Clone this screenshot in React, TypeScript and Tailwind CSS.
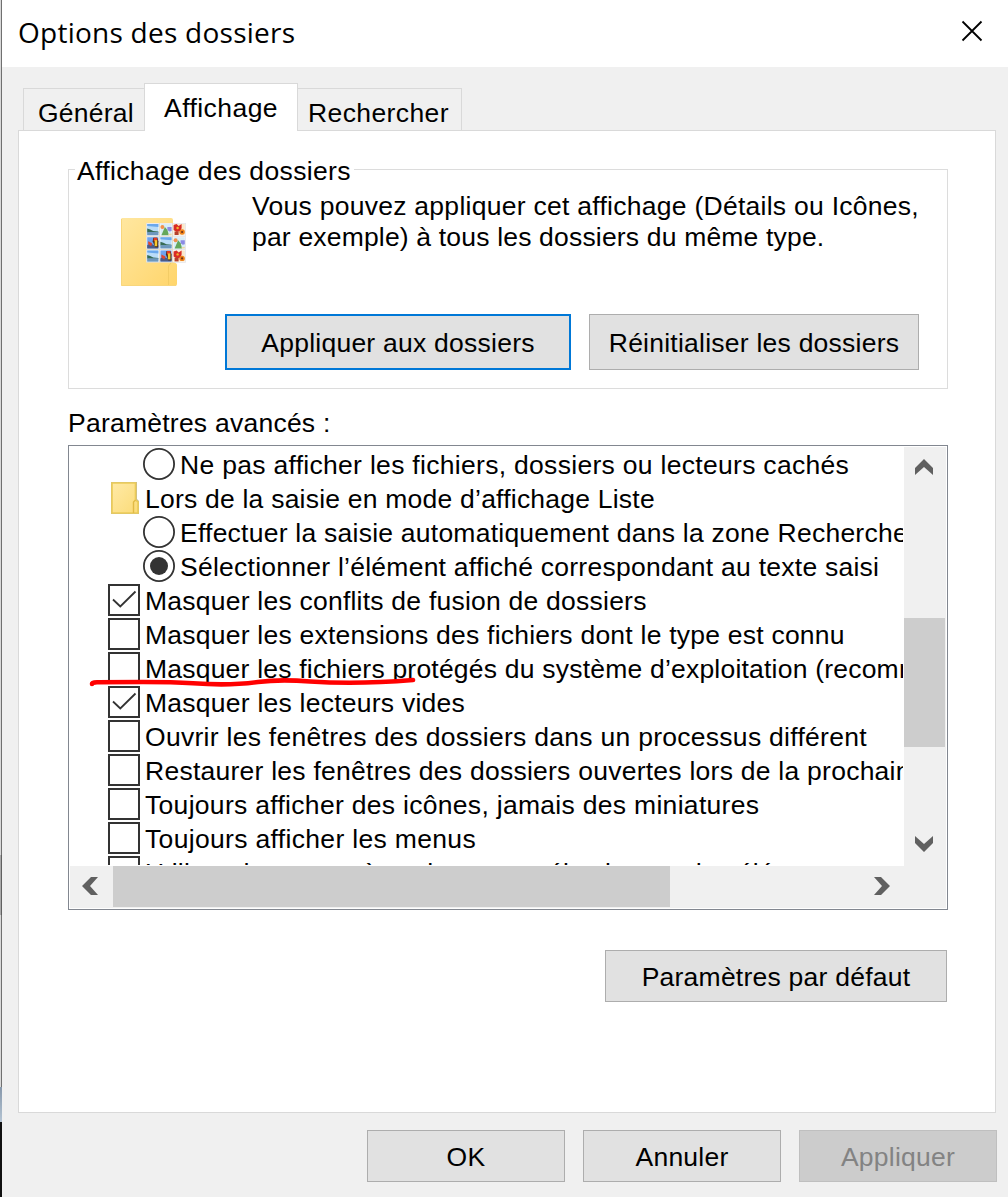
import React from "react";

type RowKind = "radio" | "radio-on" | "folder" | "check" | "check-on";

const rows: { kind: RowKind; text: string; tracking: string }[] = [
  { kind: "radio", text: "Ne pas afficher les fichiers, dossiers ou lecteurs cachés", tracking: "tracking-[0.3px]" },
  { kind: "folder", text: "Lors de la saisie en mode d’affichage Liste", tracking: "tracking-[0.22px]" },
  { kind: "radio", text: "Effectuer la saisie automatiquement dans la zone Rechercher", tracking: "tracking-[0.24px]" },
  { kind: "radio-on", text: "Sélectionner l’élément affiché correspondant au texte saisi", tracking: "tracking-[0.25px]" },
  { kind: "check-on", text: "Masquer les conflits de fusion de dossiers", tracking: "tracking-[0.23px]" },
  { kind: "check", text: "Masquer les extensions des fichiers dont le type est connu", tracking: "tracking-[0.23px]" },
  { kind: "check", text: "Masquer les fichiers protégés du système d’exploitation (recommandé)", tracking: "tracking-[0.21px]" },
  { kind: "check-on", text: "Masquer les lecteurs vides", tracking: "tracking-[0.24px]" },
  { kind: "check", text: "Ouvrir les fenêtres des dossiers dans un processus différent", tracking: "tracking-[0.28px]" },
  { kind: "check", text: "Restaurer les fenêtres des dossiers ouvertes lors de la prochaine connexion", tracking: "tracking-[0.25px]" },
  { kind: "check", text: "Toujours afficher des icônes, jamais des miniatures", tracking: "tracking-[0.3px]" },
  { kind: "check", text: "Toujours afficher les menus", tracking: "tracking-[0.33px]" },
  { kind: "check", text: "Utiliser des cases à cocher pour sélectionner des éléments", tracking: "tracking-[0.16px]" },
];

function RowIcon({ kind }: { kind: RowKind }) {
  if (kind === "folder") {
    return (
      <svg width="28" height="32" viewBox="0 0 28 32" className="mt-px mr-[6px] ml-[41px] shrink-0">
        <defs>
          <linearGradient id="smallFolder" x1="0" y1="0" x2="1" y2="1">
            <stop offset="0" stopColor="#ffeaa6" />
            <stop offset="1" stopColor="#fbdb78" />
          </linearGradient>
        </defs>
        <path d="M0 0H26V17L28 19V32H0Z" fill="#c9bc8c" />
        <path d="M1 1H24.5V18L27 20V31H1Z" fill="url(#smallFolder)" stroke="#eccb58" strokeWidth="1.6" />
        <path d="M22.5 31V20L24.5 18" fill="none" stroke="#e2ba45" strokeWidth="1.4" />
      </svg>
    );
  }
  if (kind === "radio" || kind === "radio-on") {
    return (
      <svg width="32" height="32" viewBox="0 0 32 32" className="mt-px mr-[5px] ml-[73px] shrink-0">
        <circle cx="16" cy="16" r="15.1" fill="#fff" stroke="#333" strokeWidth="1.8" />
        {kind === "radio-on" && <circle cx="16" cy="16" r="9" fill="#333" />}
      </svg>
    );
  }
  return (
    <svg width="32" height="32" viewBox="0 0 32 32" className="mt-px mr-[5px] ml-[38px] shrink-0">
      <rect x="1" y="1" width="30" height="30" fill="#fff" stroke="#333" strokeWidth="2" />
      {kind === "check-on" && <path d="M5 15.5L12.3 22.5L27.5 7.5" fill="none" stroke="#333" strokeWidth="1.8" />}
    </svg>
  );
}

function Photo({ x, y, type }: { x: number; y: number; type: number }) {
  return (
    <g transform={`translate(${x} ${y})`}>
      <rect width="13.2" height="13.2" fill="#dcdde3" />
      <rect x=".6" y=".6" width="12" height="12" fill="#fff" />
      {type === 0 && (
        <>
          <rect x="1" y="1" width="11.2" height="11.2" fill="#b9dcf8" />
          <path d="M1 1H12.2V4L1 3Z" fill="#6aa8ec" />
          <path d="M1 5.5L4 6.5L7 8L12.2 8.6V9.4H1Z" fill="#376b55" />
          <rect x="1" y="9" width="11.2" height="3.2" fill="#6d97bd" />
        </>
      )}
      {type === 1 && (
        <>
          <rect x="1" y="1" width="11.2" height="11.2" fill="#d8edf7" />
          <circle cx="3" cy="4" r="2" fill="#f2914b" />
          <path d="M8 4H12.2V8L10 8.5L8 7Z" fill="#8c8be4" />
          <path d="M5.5 4L8 7L9.5 12.2H2Z" fill="#64a75b" />
          <path d="M9 11L12.2 10.5V12.2H9Z" fill="#efd9a0" />
        </>
      )}
      {type === 2 && (
        <>
          <rect x="1" y="1" width="11.2" height="11.2" fill="#f9e8cb" />
          <path d="M1 2L4 1L6 3L9 1L9 5L8 8L4 9L1 7Z" fill="#d92c24" />
          <circle cx="5" cy="5" r="1.2" fill="#f7b52e" />
          <path d="M2 8.5H6V12H2Z" fill="#b5402c" />
          <circle cx="9.5" cy="9" r="2.7" fill="#ef8219" />
          <circle cx="9.5" cy="9" r="1.1" fill="#6c3219" />
        </>
      )}
      {type === 3 && (
        <>
          <rect x="1" y="1" width="11.2" height="11.2" fill="#6fa3ee" />
          <path d="M1 9L4 7L8 9L12.2 9V12.2H1Z" fill="#4b5a86" />
          <path d="M7 1.5H11L12.2 5L12 11H9L6.5 5Z" fill="#4a3020" />
          <path d="M7.5 1.5H11V5H7.5Z" fill="#e63a22" />
          <path d="M8.5 4H11V10H8.5Z" fill="#f9c92e" />
          <path d="M2 5L6 7L5 10L2 8Z" fill="#e2452e" />
        </>
      )}
    </g>
  );
}

const photos = [0, 1, 2, 3, 0, 1, 0, 3, 2];

function FolderPicture() {
  return (
    <svg width="66" height="70" viewBox="0 0 66 70" className="mt-[47px] ml-[52px] shrink-0">
      <defs>
        <linearGradient id="folder" x1="0" y1="0" x2="1" y2="1">
          <stop offset="0" stopColor="#ffe7a0" />
          <stop offset="1" stopColor="#ffd56b" />
        </linearGradient>
      </defs>
      <path d="M1 0H50Q52 0 52 2V44Q56 45 56 47V66Q56 68 54 68H1Q0 68 0 66V1Z" fill="url(#folder)" />
      <path d="M.5 1V67.5H55" fill="none" stroke="#f8d67c" />
      <path d="M47.5 67V48L50 45" fill="none" stroke="#f3cc66" />
      {photos.map((type, i) => (
        <Photo key={i} x={25.2 + (i % 3) * 13.2} y={5 + Math.floor(i / 3) * 13.2} type={type} />
      ))}
    </svg>
  );
}

function Arrow({ className, d, w, h }: { className: string; d: string; w: number; h: number }) {
  return (
    <svg width={w} height={h} viewBox={`0 0 ${w} ${h}`} className={className}>
      <path d={d} fill="#606060" />
    </svg>
  );
}

const button = "flex items-center justify-center border border-[#adadad] bg-[#e1e1e1] pt-[2px]";

export default function App() {
  return (
    <div className="flex h-[1197px] w-[1008px] overflow-hidden bg-[#f0f0f0] font-['Liberation_Sans',sans-serif] text-[26.5px] leading-[32px] tracking-[0.24px] whitespace-nowrap text-black">
      <div className="flex w-[2px] shrink-0 flex-col">
        <div className="h-[855px] border-r border-[#707070] bg-[#d8d8d8]" />
        <div className="h-[60px] border-r border-[#606060] bg-[#aaaaaa]" />
        <div className="h-[172px] border-r border-[#707070] bg-[#d8d8d8]" />
        <div className="h-[35px] bg-linear-to-b from-[#8798ab] to-[#b4c4d3]" />
        <div className="flex-1 bg-[#111]" />
      </div>
      <div className="flex w-[1006px] flex-col">
        <header className="flex h-[67px] shrink-0 items-start justify-between bg-white pl-[16px]">
          <h1 className="pt-[16px] font-['Open_Sans',sans-serif] text-[28px] tracking-[0.25px]">Options des dossiers</h1>
          <svg width="22" height="22" viewBox="0 0 22 22" className="mt-[20px] mr-[25px]">
            <path d="M1.5 1.5L20.5 20.5M20.5 1.5L1.5 20.5" stroke="#000" strokeWidth="1.8" />
          </svg>
        </header>

        <nav className="mt-[16px] flex h-[47px] shrink-0 items-end pl-[21px]">
          <div className="h-[42px] w-[121px] border-t border-l border-[#d9d9d9] pt-[8px] pl-[14px]">Général</div>
          <div className="relative z-10 -mb-px h-[48px] w-[154px] border border-b-0 border-[#d9d9d9] bg-white pt-[8px] pl-[19px] tracking-[0.45px]">Affichage</div>
          <div className="h-[42px] w-[164px] border-t border-r border-[#d9d9d9] pt-[8px] pl-[10px] tracking-[0.4px]">Rechercher</div>
        </nav>

        <main className="ml-[16px] flex h-[983px] w-[978px] shrink-0 flex-col border border-[#d9d9d9] bg-white pl-[49px]">
          <fieldset className="mt-[38px] flex h-[220px] w-[880px] flex-col border border-[#dcdcdc]">
            <div className="-mt-[16px] ml-[6px] h-[32px] w-[279px] bg-white pt-px pl-[2px] tracking-[0.35px]">Affichage des dossiers</div>
            <div className="-mt-[15px] flex h-[143px]">
              <FolderPicture />
              <p className="mt-[19px] ml-[65px] leading-[31px]">
                <span className="block pt-[1px] tracking-[0.27px]">Vous pouvez appliquer cet affichage (Détails ou Icônes,</span>
                <span className="block tracking-[0.18px]">par exemple) à tous les dossiers du même type.</span>
              </p>
            </div>
            <div className="ml-[156px] flex gap-[18px]">
              <button className="flex h-[56px] w-[346px] items-center justify-center border-2 border-[#0078d7] bg-[#e1e1e1] pt-[2px]">Appliquer aux dossiers</button>
              <button className={`${button} h-[56px] w-[330px]`}>Réinitialiser les dossiers</button>
            </div>
          </fieldset>

          <div className="mt-[18px] h-[38px]">Paramètres avancés :</div>

          <div className="relative flex h-[465px] w-[880px] flex-col border border-[#828790] p-px">
            <div className="flex h-[419px]">
              <ul className="h-[418px] w-[833px] overflow-hidden">
                {rows.map((row) => (
                  <li key={row.text} className="flex h-[34px] items-start">
                    <RowIcon kind={row.kind} />
                    <span className={`pt-[2px] ${row.tracking}`}>{row.text}</span>
                  </li>
                ))}
              </ul>
              <div className="ml-px flex w-[42px] flex-col bg-[#f0f0f0]">
                <Arrow className="mt-[12px] ml-[11px]" w={18} h={16} d="M0 9L9 0L18 9V16L9 8L0 16Z" />
                <div className="mt-[143px] h-[129px] w-[41px] bg-[#cdcdcd]" />
                <Arrow className="mt-[89px] ml-[11px]" w={18} h={16} d="M0 0L9 8L18 0V7L9 16L0 7Z" />
              </div>
            </div>
            <div className="flex h-[42px] bg-[#f0f0f0]">
              <Arrow className="mt-[11px] ml-[12px]" w={16} h={18} d="M9 0H16L8 9L16 18H9L0 9Z" />
              <div className="ml-[15px] h-[41px] w-[557px] bg-[#cdcdcd]" />
              <Arrow className="mt-[11px] ml-[204px]" w={16} h={18} d="M0 0H7L16 9L7 18H0L8 9Z" />
            </div>
            <svg width="330" height="14" viewBox="0 0 330 14" className="absolute top-[229px] left-[19px]">
              <path
                d="M4 9Q4 7.3 9 7.3L55 7Q85 7 105 8.3Q142 11 170 7Q192 4 222 6.5Q270 9.5 325 5"
                fill="none"
                stroke="#ff0000"
                strokeWidth="4.6"
                strokeLinecap="round"
                strokeLinejoin="round"
              />
            </svg>
          </div>

          <button className={`${button} mt-[40px] ml-[537px] h-[52px] w-[342px]`}>Paramètres par défaut</button>
        </main>

        <footer className="mt-[17px] flex gap-[18px] pl-[365px]">
          <button className={`${button} h-[52px] w-[198px]`}>OK</button>
          <button className={`${button} h-[52px] w-[198px]`}>Annuler</button>
          <button className="flex h-[52px] w-[198px] items-center justify-center border border-[#bfbfbf] bg-[#cccccc] pt-[2px] text-[#838383]">Appliquer</button>
        </footer>
      </div>
    </div>
  );
}
